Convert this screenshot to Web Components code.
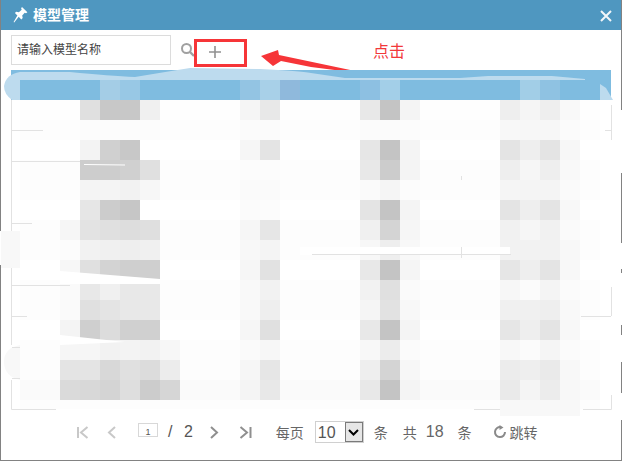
<!DOCTYPE html>
<html>
<head>
<meta charset="utf-8">
<style>
html, body { margin: 0; padding: 0; background: #fff; }
body { font-family: "Liberation Sans", "Noto Sans CJK SC", sans-serif; }
</style>
</head>
<body>
<model-dialog heading="模型管理">
  <model-toolbar></model-toolbar>
  <mosaic-table></mosaic-table>
  <page-bar></page-bar>
</model-dialog>

<script>
customElements.define('model-dialog', class extends HTMLElement {
  connectedCallback() {
    this.attachShadow({mode: 'open'});
    this.shadowRoot.innerHTML = `
    <style>
      :host { display: flex; flex-direction: column; box-sizing: border-box; width: 622px; height: 461px;
        border: 1px solid #828282; border-top: 0; background: #fff; }
      .title { display: flex; align-items: center; height: 30px; flex: none; background: #4f97c0; color: #fff; padding: 0 9px 0 12px; }
      .title svg { flex: none; }
      .name { font-size: 14px; font-weight: bold; margin-left: 5px; flex: 1; line-height: 30px; }
      .close { margin-top: 2px; }
      .body { flex: 1; display: flex; flex-direction: column; min-height: 0; }
    </style>
    <div class="title">
      <svg width="15" height="16" viewBox="0 0 15 16"><path d="M9 0 L14.4 5.2 L13 6.3 L11.7 5.7 L9.2 8.6 L9.7 11 L8.3 12.4 L5.7 9.8 L1.2 15.4 L0.6 15 L4.4 8.5 L1.9 6.1 L3.2 4.8 L5.9 5.3 L8.7 2.7 L8.1 1.2 Z" fill="#fff"/></svg>
      <span class="name">${this.getAttribute('heading')}</span>
      <svg class="close" width="12" height="12" viewBox="0 0 12 12"><path d="M1 1 L11 11 M11 1 L1 11" stroke="#f2f6f9" stroke-width="2"/></svg>
    </div>
    <div class="body"><slot></slot></div>`;
  }
});

customElements.define('model-toolbar', class extends HTMLElement {
  connectedCallback() {
    this.attachShadow({mode: 'open'});
    this.shadowRoot.innerHTML = `
    <style>
      :host { display: flex; align-items: center; height: 40px; flex: none; padding: 0 0 0 10px; box-sizing: border-box; position: relative; }
      .input { box-sizing: border-box; width: 160px; height: 30px; border: 1px solid #dcdcdc; padding-left: 5px;
        font-size: 12px; line-height: 28px; color: #444; }
      .search { margin-left: 10px; flex: none; display: block; }
      .plus { flex: none; display: block; margin: 3px 0 0 14px; }
      .mark { position: absolute; left: 193px; top: 9px; width: 53px; height: 28px; box-sizing: border-box; border: 3px solid #f63538; }
      .arrow { position: absolute; left: 258px; top: 19px; }
      .note { position: absolute; left: 372px; top: 12px; font-size: 16px; line-height: 20px; color: #f2383a; }
    </style>
    <div class="input">请输入模型名称</div>
    <svg class="search" width="14" height="14" viewBox="0 0 14 14"><circle cx="5.5" cy="5.5" r="4.5" fill="none" stroke="#a0a0a0" stroke-width="2"/><path d="M9 9 L13 13" stroke="#a0a0a0" stroke-width="2.4"/></svg>
    <svg class="plus" width="12" height="12" viewBox="0 0 12 12"><path d="M6 0 V12 M0 6 H12" stroke="#919191" stroke-width="1.6"/></svg>
    <div class="mark"></div>
    <svg class="arrow" width="120" height="30" viewBox="0 0 120 30"><path d="M2 7 L19 1 L20 6 L115 26 L52 18 L22 12 L14 17 Z" fill="#f63538"/></svg>
    <div class="note">点击</div>`;
  }
});

// grey value for each mosaic cell, keyed by left edge of the cell
const COLS = [40, 60, 80, 100, 120, 140, 160, 240, 260, 360, 380, 400, 500, 520, 540, 560];
const ROWS = [
  ['fe', 'fe', 'e0', 'c8', 'c8', 'f0', 'fe', 'f5', 'e8', 'e8', 'c4', 'f4', 'ee', 'f5', 'ee', 'f9'],
  ['fd', 'fd', 'fc', 'fc', 'fc', 'fc', 'fd', 'fb', 'fb', 'fb', 'fb', 'fc', 'f8', 'f7', 'f7', 'fb'],
  ['ff', 'ff', 'f3', 'd0', 'c8', 'ff', 'ff', 'f6', 'e4', 'e6', 'c4', 'f4', 'e4', 'ee', 'e4', 'f7'],
  ['fd', 'fd', 'cd', 'cd', 'd0', 'e0', 'fd', 'fc', 'fc', 'e8', 'cc', 'f4', 'ee', 'f6', 'ee', 'f9'],
  ['fd', 'fd', 'f4', 'f4', 'f2', 'f7', 'fd', 'fa', 'fa', 'fa', 'f5', 'fc', 'f5', 'f4', 'f4', 'fa'],
  ['ff', 'ff', 'e6', 'cc', 'c6', 'ff', 'ff', 'fb', 'fc', 'e4', 'c4', 'f4', 'e4', 'ee', 'e4', 'f8'],
  ['fd', 'f6', 'e3', 'e0', 'dd', 'df', 'fd', 'f6', 'e6', 'f0', 'd4', 'f6', 'f1', 'f6', 'f1', 'fa'],
  ['fd', 'fc', 'f2', 'f0', 'ee', 'f0', 'fd', 'f8', 'f4', 'f7', 'ee', 'f8', 'f2', 'f2', 'f2', 'f8'],
  ['ff', 'f7', 'e0', 'd3', 'cf', 'cf', 'ff', 'f6', 'e2', 'e8', 'c4', 'f5', 'e6', 'ee', 'e4', 'f8'],
  ['fd', 'fa', 'e8', 'f0', 'e8', 'e8', 'fd', 'f9', 'f2', 'f2', 'e0', 'fa', 'f7', 'fb', 'f4', 'fb'],
  ['fd', 'fa', 'e0', 'e4', 'e8', 'e8', 'fd', 'f9', 'ee', 'f5', 'e2', 'f8', 'f0', 'f0', 'ee', 'f9'],
  ['ff', 'f4', 'cf', 'dc', 'd0', 'd0', 'ff', 'f6', 'e0', 'e8', 'c4', 'f4', 'e6', 'ee', 'e4', 'f8'],
  ['fd', 'f6', 'f6', 'f2', 'f3', 'f2', 'f7', 'fa', 'f7', 'f8', 'ec', 'fb', 'f8', 'fb', 'f5', 'fb'],
  ['fd', 'e4', 'e4', 'd8', 'e0', 'dc', 'ec', 'f6', 'e6', 'ee', 'd4', 'f7', 'ec', 'ee', 'ea', 'f8'],
  ['fa', 'da', 'd8', 'd4', 'de', 'cc', 'd6', 'f4', 'e8', 'e8', 'c4', 'f4', 'ea', 'f4', 'ec', 'f8']
];
const HEAD = {100: '#a4cde6', 120: '#98c8e5', 240: '#93c4e3', 260: '#a8d0e8', 280: '#8fb9dc', 360: '#8dc0e2', 380: '#a3cfe8', 520: '#a2cee7', 540: '#8fc2e2'};

customElements.define('mosaic-table', class extends HTMLElement {
  connectedCallback() {
    this.attachShadow({mode: 'open'});
    let head = '';
    for (let x = 20; x < 600; x += 20) {
      head += `<i style="background:${HEAD[x] || '#7fbce0'}"></i>`;
    }
    let cells = '';
    ROWS.forEach(row => {
      for (let x = 20; x < 600; x += 20) {
        const k = COLS.indexOf(x);
        const v = k >= 0 ? row[k] : row[0];
        cells += `<i style="background:#${v}${v}${v}"></i>`;
      }
    });
    this.shadowRoot.innerHTML = `
    <style>
      :host { display: block; position: relative; flex: none; margin: 0 10px; height: 340px; }
      .band { height: 30px; background: #7fbce0; display: flex; align-items: flex-end; padding-left: 9px; }
      .band div { display: grid; grid-template-columns: repeat(29, 20px); grid-auto-rows: 20px; }
      .grid { display: grid; grid-template-columns: repeat(29, 20px); grid-auto-rows: 20px; padding-left: 9px; }
      i { display: block; }
      svg { position: absolute; left: -11px; top: -70px; }
    </style>
    <div class="band"><div>${head}</div></div>
    <div class="grid">${cells}</div>
    <svg width="622" height="461" viewBox="0 0 622 461">
      <path d="M20 72 H70 Q110 76 135 77 Q165 72 190 68 L260 69 Q300 71 311 73 L345 78 H460 L488 76 H552 L585 79 V80 H20 Z" fill="#bddbee"/>
      <path d="M20 72 Q6 74 4 86 Q4 94 12 100 H20 Z" fill="#bddbee"/>
      <path d="M600 84 L606 88 L613 100 H600 Z" fill="#bddbee"/>
      <rect x="20" y="400" width="580" height="9" fill="#fdfdfd"/>
      <rect x="500" y="400" width="80" height="16" fill="#f8f8f8"/>
      <path d="M60 271 L160 279 V284 H60 Z" fill="#fff"/>
      <path d="M60 335 L125 342 L60 345 Z" fill="#fff"/>
      <rect x="300" y="247" width="210" height="8" fill="#fff"/>
      <path d="M1 231 H20 V268 H1 Z" fill="#f8f8f8"/>
      <path d="M20 345 Q4 348 4 362 Q4 376 20 380 Z" fill="#f8f8f8"/>
      <g stroke="#e2e2e2" stroke-width="1" fill="none">
        <path d="M11.5 100 V231 M11.5 268 V345 M11.5 380 V409.5 H56"/>
        <path d="M12 130.5 H43 M12 161.5 H80 M12 223.5 H32 M12 285.5 H70 M12 316.5 H27 M12 347.5 H20 M12 378.5 H20"/>
        <path d="M611.5 105 V140 M611.5 287 V316 M611.5 395 V409.5 H583 M500 409.5 H474 M605 130.5 H611 M581 316.5 H611"/>
        <path d="M312 254.5 H511 M461.5 176 V180 M461.5 247 V258"/>
      </g>
      <path d="M84 164.5 L125 165" stroke="#fff" fill="none"/>
      <path d="M0.5 231 V265 M621.5 110 V173 M621.5 243 V269 M621.5 273 V325 M621.5 335 V362 M621.5 393 V420" stroke="#fff" fill="none"/>
    </svg>`;
  }
});

customElements.define('page-bar', class extends HTMLElement {
  connectedCallback() {
    this.attachShadow({mode: 'open'});
    this.shadowRoot.innerHTML = `
    <style>
      :host { display: flex; align-items: center; flex: 1; padding: 0 0 6px 76px; font-size: 14px; color: #666; box-sizing: border-box; }
      svg { display: block; flex: none; }
      .num { box-sizing: border-box; width: 20px; height: 14px; border: 1px solid #d8d8d8; font-size: 9px; line-height: 16px; text-align: center; color: #555; margin: -4px 0 0 21px; overflow: hidden; }
      .frac { font-size: 16px; margin-left: 10px; word-spacing: 7px; color: #555; }
      .select { box-sizing: border-box; display: flex; width: 49px; height: 22px; border: 1px solid #d0d0d0; margin-left: 11px; font-size: 16px; color: #555; }
      .select span { flex: 1; padding-left: 2px; line-height: 22px; }
      .select b { display: flex; align-items: center; justify-content: center; box-sizing: border-box; width: 18px; background: #e6e6e6; border: 1px solid #7a7a7a; }
    </style>
    <svg width="13" height="13" viewBox="0 0 13 13"><path d="M1 1 V12 M10.5 1 L4 6.5 L10.5 12" fill="none" stroke="#c8c8c8" stroke-width="2"/></svg>
    <svg width="10" height="13" viewBox="0 0 10 13" style="margin-left:17px"><path d="M8 1 L2 6.5 L8 12" fill="none" stroke="#c8c8c8" stroke-width="2"/></svg>
    <span class="num">1</span>
    <span class="frac">/ 2</span>
    <svg width="10" height="13" viewBox="0 0 10 13" style="margin-left:16px"><path d="M2 1 L8 6.5 L2 12" fill="none" stroke="#8f8f8f" stroke-width="2"/></svg>
    <svg width="13" height="13" viewBox="0 0 13 13" style="margin-left:20px"><path d="M1.5 1 L8 6.5 L1.5 12 M11.5 1 V12" fill="none" stroke="#8f8f8f" stroke-width="2"/></svg>
    <span style="margin-left:24px">每页</span>
    <span class="select"><span>10</span><b><svg width="11" height="7" viewBox="0 0 11 7"><path d="M1 1 L5.5 5.5 L10 1" fill="none" stroke="#000" stroke-width="2"/></svg></b></span>
    <span style="margin-left:10px">条</span>
    <span style="margin-left:15px">共</span>
    <span style="margin-left:9px;font-size:16px">18</span>
    <span style="margin-left:14px">条</span>
    <svg width="14" height="14" viewBox="0 0 14 14" style="margin-left:21px"><path d="M8 2.2 A5 5 0 1 0 12 7" fill="none" stroke="#8a8a8a" stroke-width="2"/><path d="M6.5 0 L10.5 2.4 L6.5 5 Z" fill="#8a8a8a"/></svg>
    <span style="margin-left:3px">跳转</span>`;
  }
});
</script>
</body>
</html>
